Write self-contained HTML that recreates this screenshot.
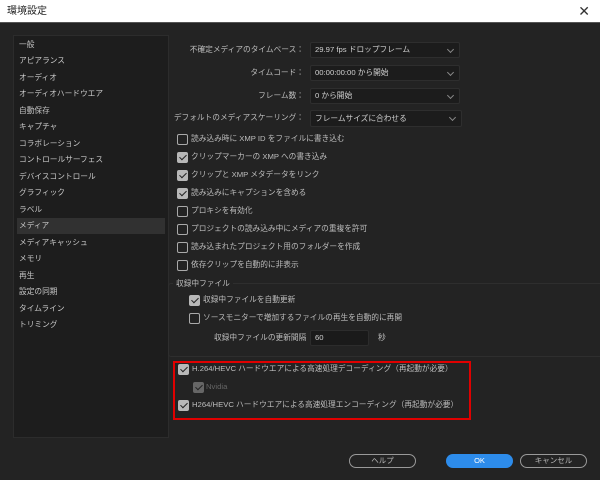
<!DOCTYPE html>
<html><head><meta charset="utf-8"><style>
*{margin:0;padding:0;box-sizing:border-box}
body{width:600px;height:480px;background:#232323;font-family:"Liberation Sans","Noto Sans CJK JP",sans-serif;font-size:7.7px;color:#bdbdbd;position:relative;overflow:hidden}
.a{position:absolute;white-space:nowrap}
#title{left:0;top:0;width:600px;height:23px;background:#fff;border-bottom:1px solid #555;color:#222;font-size:10px;line-height:23px;padding-left:7px}
#list{left:13px;top:35px;width:156px;height:403px;background:#1d1d1d;border:1px solid #2c2c2c}
.li{position:absolute;left:3px;width:148px;height:16px;line-height:16px;padding-left:2px;color:#c8c8c8}
.sel{background:#313131}
.lab{text-align:right;width:200px;left:104px;line-height:16px}
.dd{position:absolute;left:310px;width:150px;height:16px;background:#1c1c1c;border:1px solid #2e2e2e;border-radius:2px;line-height:14px;padding-left:4px;color:#d0d0d0}
.dd:after{content:"";position:absolute;right:6px;top:4px;width:4px;height:4px;border-right:1px solid #888;border-bottom:1px solid #888;transform:rotate(45deg)}
.cb{position:absolute;width:11px;height:11px;border:1px solid #aaa;border-radius:2px}
.ck{background:#b8b8b8;border-color:#b8b8b8}
.ck:after{content:"";position:absolute;left:3px;top:0px;width:3px;height:6px;border-right:1.5px solid #222;border-bottom:1.5px solid #222;transform:rotate(45deg)}
.t{position:absolute;line-height:12px;white-space:nowrap}
.btn{position:absolute;top:454px;width:67px;height:14px;border-radius:7px;text-align:center;line-height:12px;font-size:7.5px}
</style></head><body>
<div id="title" class="a">環境設定<span style="position:absolute;right:10px;top:0;font-size:14px;color:#333">✕</span></div>
<div id="list" class="a">
<div class="li" style="top:1px">一般</div>
<div class="li" style="top:17px">アピアランス</div>
<div class="li" style="top:34px">オーディオ</div>
<div class="li" style="top:50px">オーディオハードウエア</div>
<div class="li" style="top:67px">自動保存</div>
<div class="li" style="top:83px">キャプチャ</div>
<div class="li" style="top:100px">コラボレーション</div>
<div class="li" style="top:116px">コントロールサーフェス</div>
<div class="li" style="top:133px">デバイスコントロール</div>
<div class="li" style="top:149px">グラフィック</div>
<div class="li" style="top:166px">ラベル</div>
<div class="li sel" style="top:182px">メディア</div>
<div class="li" style="top:199px">メディアキャッシュ</div>
<div class="li" style="top:215px">メモリ</div>
<div class="li" style="top:232px">再生</div>
<div class="li" style="top:248px">設定の同期</div>
<div class="li" style="top:265px">タイムライン</div>
<div class="li" style="top:281px">トリミング</div>
</div>
<div class="a lab" style="top:42px">不確定メディアのタイムベース：</div>
<div class="dd" style="top:42px">29.97 fps ドロップフレーム</div>
<div class="a lab" style="top:65px">タイムコード：</div>
<div class="dd" style="top:65px">00:00:00:00 から開始</div>
<div class="a lab" style="top:88px">フレーム数：</div>
<div class="dd" style="top:88px">0 から開始</div>
<div class="a lab" style="top:110px">デフォルトのメディアスケーリング：</div>
<div class="dd" style="top:110px;width:152px;height:17px;line-height:15px">フレームサイズに合わせる</div>

<div class="cb" style="left:177px;top:134px"></div><div class="t" style="left:191px;top:133px">読み込み時に XMP ID をファイルに書き込む</div>
<div class="cb ck" style="left:177px;top:152px"></div><div class="t" style="left:191px;top:151px">クリップマーカーの XMP への書き込み</div>
<div class="cb ck" style="left:177px;top:170px"></div><div class="t" style="left:191px;top:169px">クリップと XMP メタデータをリンク</div>
<div class="cb ck" style="left:177px;top:188px"></div><div class="t" style="left:191px;top:187px">読み込みにキャプションを含める</div>
<div class="cb" style="left:177px;top:206px"></div><div class="t" style="left:191px;top:205px">プロキシを有効化</div>
<div class="cb" style="left:177px;top:224px"></div><div class="t" style="left:191px;top:223px">プロジェクトの読み込み中にメディアの重複を許可</div>
<div class="cb" style="left:177px;top:242px"></div><div class="t" style="left:191px;top:241px">読み込まれたプロジェクト用のフォルダーを作成</div>
<div class="cb" style="left:177px;top:260px"></div><div class="t" style="left:191px;top:259px">依存クリップを自動的に非表示</div>

<div class="a" style="left:168px;top:283px;width:440px;height:74px;border:1px solid #2e2e2e;border-radius:3px"></div>
<div class="t" style="left:173px;top:278px;background:#232323;padding:0 3px">収録中ファイル</div>
<div class="cb ck" style="left:189px;top:295px"></div><div class="t" style="left:203px;top:294px">収録中ファイルを自動更新</div>
<div class="cb" style="left:189px;top:313px"></div><div class="t" style="left:203px;top:312px">ソースモニターで増加するファイルの再生を自動的に再開</div>
<div class="t" style="left:214px;top:332px">収録中ファイルの更新間隔</div>
<div class="a" style="left:310px;top:330px;width:59px;height:16px;background:#1a1a1a;border:1px solid #2c2c2c;border-radius:2px;padding-left:4px;line-height:14px;color:#d0d0d0">60</div>
<div class="t" style="left:378px;top:332px">秒</div>

<div class="a" style="left:173px;top:361px;width:298px;height:59px;border:2px solid #e00000"></div>
<div class="cb ck" style="left:178px;top:364px"></div><div class="t" style="left:192px;top:363px">H.264/HEVC ハードウエアによる高速処理デコーディング（再起動が必要）</div>
<div class="cb ck" style="left:193px;top:382px;opacity:.45"></div><div class="t" style="left:206px;top:381px;color:#666">Nvidia</div>
<div class="cb ck" style="left:178px;top:400px"></div><div class="t" style="left:192px;top:399px">H264/HEVC ハードウエアによる高速処理エンコーディング（再起動が必要）</div>

<div class="btn" style="left:349px;border:1px solid #999;color:#bbb">ヘルプ</div>
<div class="btn" style="left:446px;background:#2d8ceb;color:#fff;line-height:14px">OK</div>
<div class="btn" style="left:520px;border:1px solid #999;color:#bbb">キャンセル</div>
</body></html>
